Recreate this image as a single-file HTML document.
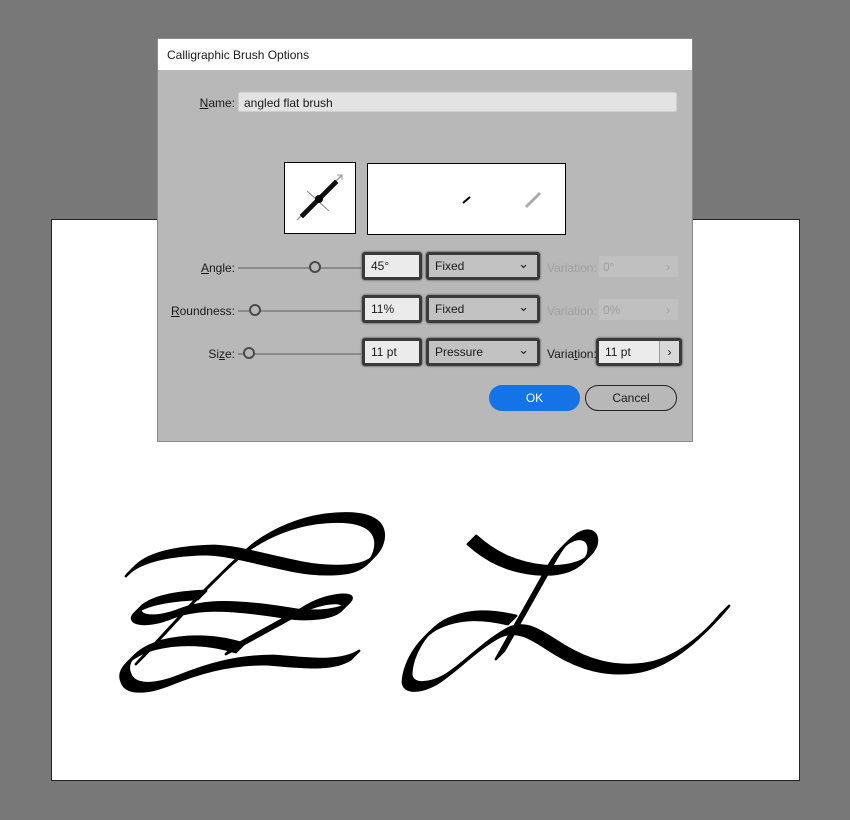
<!DOCTYPE html>
<html><head><style>
*{box-sizing:border-box}
body{margin:0;width:850px;height:820px;background:#787878;position:relative;overflow:hidden;font-family:"Liberation Sans",sans-serif;font-size:12px;color:#1a1a1a}
.a{position:absolute}
.art{left:51px;top:219px;width:749px;height:562px;background:#fff;border:1px solid #222}
.dlg{left:157px;top:38px;width:536px;height:404px;background:#b8b8b8;border:1px solid #8a8a8a}
.title{left:0;top:0;width:534px;height:31px;background:#fff;padding:9px 0 0 9px;font-size:12px}
.lbl{text-align:right;width:80px}
.fld{border:3px solid #3a3a3a;border-radius:3px;box-shadow:0 0 2px #333;background:#ebebeb;height:28px;padding:4px 0 0 6px}
.dd{background:#c2c2c2;padding-left:6px}
.dd:after{content:"⌄";position:absolute;right:8px;top:1px;font-size:13px}
.dis{background:#c0c0c0;color:#9e9e9e;height:21px;padding:4px 0 0 4px}
.slider{height:2px;background:#8a8a8a}
.knob{width:12px;height:12px;border:2px solid #4a4a4a;border-radius:50%;background:#b8b8b8}
</style></head><body>
<div class="a art"></div>
<svg class="a" style="left:0;top:0" width="850" height="820">
<defs>
<g id="g" fill="none" stroke="#000" stroke-width="2.4" stroke-linecap="round">
<path d="M130,572 C140,560 165,551 210,550 C235,551 255,558 299,567 C320,571 350,572 363,565 C378,558 385,538 375,527 C365,517 345,516 320,519 C300,522 275,530 251,547 C235,560 220,575 202,593 L140,660"/>
<path d="M202,595 C175,596 150,600 138,610 C130,620 150,624 175,614 C200,604 230,604 287,613 C310,617 340,615 347,604 C352,595 320,598 299,612 C290,617 285,620 279,623 L230,650"/>
<path d="M240,648 C215,640 185,638 158,645 C135,652 120,665 126,678 C130,690 150,690 175,680 C200,670 230,660 270,660 C300,662 335,668 355,655"/>
<path d="M472,540 C490,556 510,567 540,570 C565,572 585,566 592,550 C596,536 585,530 572,539 C560,548 556,556 549,568 L500,655"/>
<path d="M512,620 C490,615 465,612 440,625 C420,637 408,660 407,678 C408,690 425,688 440,680 C460,668 480,645 505,632 C525,624 540,638 560,650 C585,665 610,672 640,668 C670,664 700,640 725,610"/>
</g>
</defs>
<use href="#g" x="-4.2" y="4.2"/><use href="#g" x="-3.6" y="3.6"/><use href="#g" x="-2.9" y="2.9"/><use href="#g" x="-2.2" y="2.2"/><use href="#g" x="-1.5" y="1.5"/><use href="#g" x="-0.8" y="0.8"/><use href="#g"/><use href="#g" x="0.8" y="-0.8"/><use href="#g" x="1.5" y="-1.5"/><use href="#g" x="2.2" y="-2.2"/><use href="#g" x="2.9" y="-2.9"/><use href="#g" x="3.6" y="-3.6"/><use href="#g" x="4.2" y="-4.2"/>
</svg>
<div class="a dlg">
<div class="a title">Calligraphic Brush Options</div>
<div class="a lbl" style="left:0;top:57px;width:77px"><u>N</u>ame:</div>
<div class="a" style="left:80px;top:53px;width:439px;height:20px;background:#e3e3e3;border:1px solid #cfcfcf;border-radius:2px;padding:3px 5px">angled flat brush</div>
<div class="a" style="left:126px;top:123px;width:72px;height:72px;background:#fff;border:1px solid #000">
<svg width="70" height="70"><line x1="12" y1="57" x2="57" y2="12" stroke="#999" stroke-width="1.5"/><path d="M52,12 L57,12 L57,17" fill="none" stroke="#999"/><line x1="22" y1="28" x2="44" y2="48" stroke="#888"/><path d="M16,52 L50,18 L52,20 L18,54Z" fill="#111" stroke="#111" stroke-width="2"/><circle cx="34" cy="36" r="4" fill="#000"/></svg></div>
<div class="a" style="left:209px;top:124px;width:199px;height:72px;background:#fff;border:1px solid #000">
<svg width="197" height="70"><line x1="95" y1="39" x2="102" y2="33" stroke="#000" stroke-width="2"/><line x1="158" y1="43" x2="172" y2="29" stroke="#aaa" stroke-width="3"/></svg></div>

<div class="a lbl" style="left:0;top:222px;width:77px"><u>A</u>ngle:</div>
<div class="a slider" style="left:80px;top:228px;width:123px"></div>
<div class="a knob" style="left:151px;top:222px"></div>
<div class="a fld" style="left:204px;top:213px;width:60px">45°</div>
<div class="a fld dd" style="left:268px;top:213px;width:114px">Fixed</div>
<div class="a" style="left:389px;top:222px;color:#a0a0a0">Variation:</div>
<div class="a dis" style="left:441px;top:217px;width:79px">0°<span style="float:right;margin-right:8px">›</span></div>

<div class="a lbl" style="left:0;top:265px;width:77px"><u>R</u>oundness:</div>
<div class="a slider" style="left:80px;top:271px;width:123px"></div>
<div class="a knob" style="left:91px;top:265px"></div>
<div class="a fld" style="left:204px;top:256px;width:60px">11%</div>
<div class="a fld dd" style="left:268px;top:256px;width:114px">Fixed</div>
<div class="a" style="left:389px;top:265px;color:#a0a0a0">Variation:</div>
<div class="a dis" style="left:441px;top:260px;width:79px">0%<span style="float:right;margin-right:8px">›</span></div>

<div class="a lbl" style="left:0;top:308px;width:77px">Si<u>z</u>e:</div>
<div class="a slider" style="left:80px;top:314px;width:123px"></div>
<div class="a knob" style="left:85px;top:308px"></div>
<div class="a fld" style="left:204px;top:299px;width:60px">11 pt</div>
<div class="a fld dd" style="left:268px;top:299px;width:114px">Pressure</div>
<div class="a" style="left:389px;top:308px">Varia<u>t</u>ion:</div>
<div class="a fld" style="left:438px;top:299px;width:86px">11 pt<span style="position:absolute;right:0;top:0;width:20px;height:22px;border-left:1px solid #999;background:#d8d8d8;text-align:center;padding-top:4px">›</span></div>

<div class="a" style="left:331px;top:346px;width:91px;height:26px;background:#1473e6;border-radius:13px;color:#fff;text-align:center;padding-top:6px">OK</div>
<div class="a" style="left:427px;top:346px;width:92px;height:26px;border:1.5px solid #222;border-radius:13px;text-align:center;padding-top:5px">Cancel</div>
</div>
</body></html>
